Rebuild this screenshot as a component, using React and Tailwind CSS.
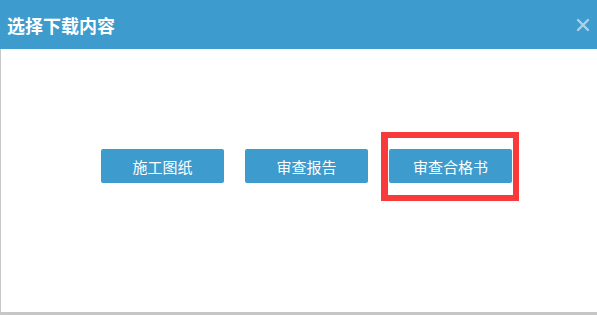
import React from 'react';

const buttons = ['施工图纸', '审查报告', '审查合格书'];

export default function App() {
  return (
    <div
      className="relative w-[597px] h-[315px] flex flex-col bg-white overflow-hidden"
      style={{ fontFamily: '"Noto Sans CJK SC", "Noto Sans", sans-serif' }}
    >
      {/* Header */}
      <div className="h-[49px] shrink-0 bg-[#3e9bcd] flex items-center justify-between pl-[7px] pr-[7px]">
        <span className="text-white text-[18px] font-bold leading-none tracking-[0px]">选择下载内容</span>
        <svg width="14" height="14" viewBox="0 0 14 14" className="mt-[1px]">
          <path d="M2 2 L12 12 M12 2 L2 12" stroke="#a9d3ea" strokeWidth="2.4" strokeLinecap="round" />
        </svg>
      </div>

      {/* Body */}
      <div className="flex-1 border-l border-b-[3px] border-l-[#c8c8c8] border-b-[#c6c6c6]">
        <div className="flex pt-[100px] pl-[100px] gap-[21px]">
          {buttons.map((label) => (
            <button
              key={label}
              className="w-[123px] h-[34px] rounded-[2px] bg-[#3e9bcd] text-white text-[15px] leading-none flex items-center justify-center"
            >
              {label}
            </button>
          ))}
        </div>
      </div>

      {/* Red annotation box */}
      <div className="absolute left-[381px] top-[132px] w-[138px] h-[69px] border-l-[7px] border-r-[6px] border-t-[6px] border-b-[6px] border-[#f83a3a]" />
    </div>
  );
}
